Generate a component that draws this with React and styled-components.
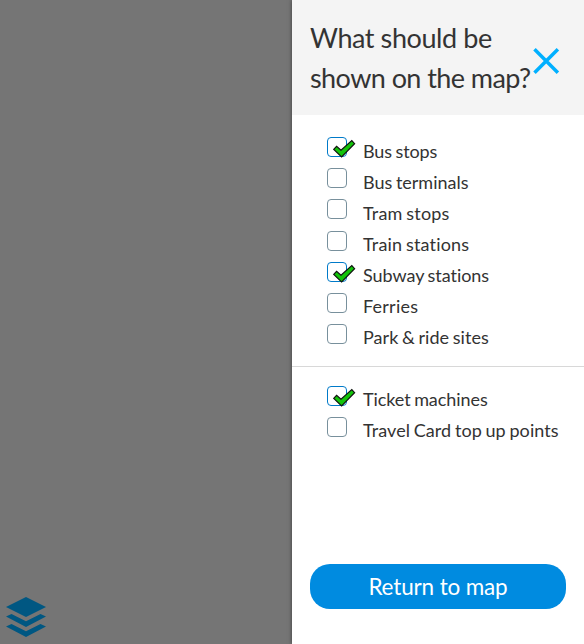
import React from "react";
import styled, { createGlobalStyle } from "styled-components";

const GlobalStyle = createGlobalStyle`
  *, *::before, *::after { box-sizing: border-box; }
  body { margin: 0; font-family: Lato, sans-serif; color: #333; overflow: hidden; }
`;

const Screen = styled.div`
  display: flex;
  width: 584px;
  height: 644px;
  background: #757575;
`;

const MapArea = styled.div`
  flex: 1;
  display: flex;
  align-items: flex-end;
  padding: 0 0 6px 6px;
`;

const Panel = styled.aside`
  width: 292px;
  display: flex;
  flex-direction: column;
  background: #fff;
  box-shadow: 0 0 4px rgba(0, 0, 0, 0.5);
`;

const Header = styled.header`
  height: 115px;
  display: flex;
  align-items: flex-start;
  padding: 18px 0 0 18px;
  background: #f4f4f4;
`;

const Title = styled.h2`
  width: 222px;
  margin: 0;
  font-size: 27px;
  font-weight: 400;
  line-height: 40px;
  white-space: nowrap;
`;

const TitleLine = styled.span`
  display: block;
  letter-spacing: ${(p) => p.$spacing}px;
`;

const CloseButton = styled.button`
  display: flex;
  margin: 29px 0 0;
  padding: 0;
  border: 0;
  background: none;
`;

const Group = styled.ul`
  list-style: none;
  margin: 0;
  padding: ${(p) => (p.$second ? "18.9px" : "22.3px")} 0 0 35px;
  height: ${(p) => (p.$second ? "auto" : "252px")};
  border-bottom: ${(p) => (p.$second ? "0" : "1px solid #d8d8d8")};
`;

const Option = styled.li`
  height: 31.1px;
`;

const OptionLabel = styled.label`
  display: flex;
  align-items: flex-start;
  gap: 16px;
`;

const Box = styled.span`
  position: relative;
  width: 20px;
  height: 20px;
  border: 1px solid ${(p) => (p.$checked ? "#007ac9" : "#78909c")};
  border-radius: 4px;
`;

const Tick = styled.svg`
  position: absolute;
  left: 5px;
  top: 1px;
`;

const OptionText = styled.span`
  margin-top: 1.25px;
  font-size: 18px;
  line-height: 24px;
  white-space: nowrap;
  font-variant-ligatures: none;
  word-spacing: -1px;
  letter-spacing: ${(p) => p.$spacing}px;
`;

const Footer = styled.footer`
  margin-top: auto;
  padding: 0 18px 35.5px;
`;

const ReturnButton = styled.button`
  display: block;
  width: 256px;
  height: 44.5px;
  padding: 2px 0 0;
  border: 0;
  border-radius: 20px;
  background: #008be0;
  color: #fff;
  font: 400 22.5px/42px Lato, sans-serif;
  letter-spacing: -0.15px;
`;

const groups = [
  [
    ["Bus stops", true, -0.11],
    ["Bus terminals", false, 0],
    ["Tram stops", false, 0.18],
    ["Train stations", false, 0.17],
    ["Subway stations", true, -0.04],
    ["Ferries", false, 0.22],
    ["Park & ride sites", false, 0.04],
  ],
  [
    ["Ticket machines", true, -0.07],
    ["Travel Card top up points", false, 0.07],
  ],
];

function LayersIcon() {
  return (
    <svg width="40" height="41" viewBox="0 0 40 41" fill="#005782">
      <path d="M20 0 40 10 20 20 0 10Z" />
      <path d="M0 19.500 5.500 17 20 24.200 34.500 17 40 19.500 20 30Z" />
      <path d="M0 29.500 5.500 27 20 34.200 34.500 27 40 29.500 20 40Z" />
    </svg>
  );
}

function CloseIcon() {
  return (
    <svg width="28" height="28" viewBox="0 0 28 28" stroke="#00b0ff" strokeWidth="3.500">
      <path d="M2.500 2.300 25.900 25.700M25.900 2.300 2.500 25.700" />
    </svg>
  );
}

function CheckMark() {
  return (
    <Tick width="23" height="20" viewBox="0 0 23 20">
      <path
        d="M.7 10.400 3.600 7.300 8 11.300 18.800 1.500 21.600 4.700 8.600 18Z"
        fill="#13c40a"
        stroke="#111"
        strokeWidth="1.200"
      />
    </Tick>
  );
}

export default function App() {
  return (
    <>
      <GlobalStyle />
      <Screen>
        <MapArea>
          <LayersIcon />
        </MapArea>
        <Panel>
          <Header>
            <Title>
              <TitleLine $spacing={-0.42}>What should be</TitleLine>
              <TitleLine $spacing={-0.57}>shown on the map?</TitleLine>
            </Title>
            <CloseButton aria-label="Close">
              <CloseIcon />
            </CloseButton>
          </Header>
          {groups.map((options, i) => (
            <Group key={i} $second={i === 1}>
              {options.map(([name, checked, spacing]) => (
                <Option key={name}>
                  <OptionLabel>
                    <Box $checked={checked}>{checked && <CheckMark />}</Box>
                    <OptionText $spacing={spacing}>{name}</OptionText>
                  </OptionLabel>
                </Option>
              ))}
            </Group>
          ))}
          <Footer>
            <ReturnButton>Return to map</ReturnButton>
          </Footer>
        </Panel>
      </Screen>
    </>
  );
}
